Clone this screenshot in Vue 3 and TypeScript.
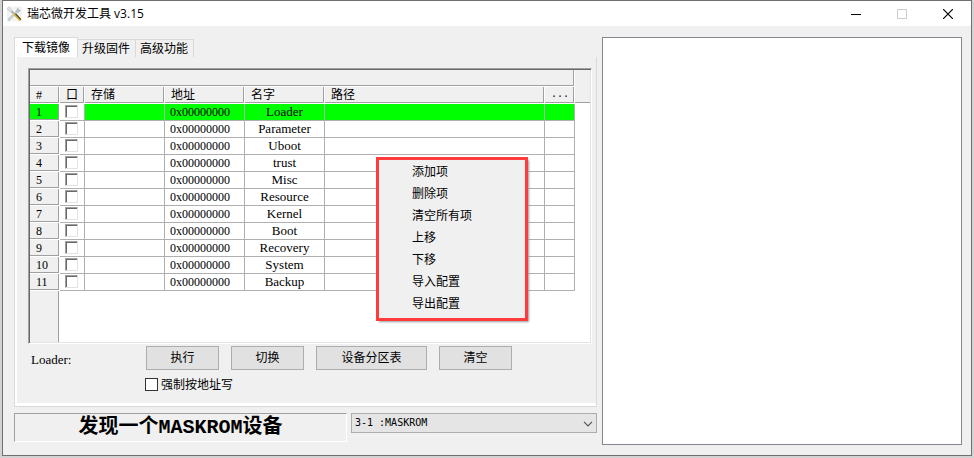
<script setup lang="ts">
import { ref } from 'vue'

interface Partition {
  name: string
  address: string
  storage: string
  path: string
  checked: boolean
}

const tabs: string[] = ['下载镜像', '升级固件', '高级功能']
const activeTab = ref<number>(0)

const names: string[] = [
  'Loader', 'Parameter', 'Uboot', 'trust', 'Misc', 'Resource',
  'Kernel', 'Boot', 'Recovery', 'System', 'Backup',
]
const rows = ref<Partition[]>(
  names.map((name) => ({ name, address: '0x00000000', storage: '', path: '', checked: false })),
)
const selectedRow = ref<number>(0)

const menuItems: string[] = ['添加项', '删除项', '清空所有项', '上移', '下移', '导入配置', '导出配置']
const forceByAddress = ref<boolean>(false)
const device = ref<string>('3-1')
</script>

<template>
  <div class="window">
    <header class="titlebar">
      <svg class="app-icon" viewBox="0 0 16 16" aria-hidden="true">
        <path d="M0 0h16v16H0z" fill="#f4f4f2" />
        <path d="M3 3l6 6.4" stroke="#a4a8aa" stroke-width="1.8" />
        <path d="M.4 1.6 2.4.4l3.4 4L4.2 6 1 4z" fill="#dfe2e3" stroke="#bfc3c5" stroke-width=".6" />
        <path d="M2 14 11 5" stroke="#b9c6ce" stroke-width="2.8" stroke-linecap="round" />
        <path d="M2.2 13.8 10.6 5.4" stroke="#dde5ea" stroke-width="1" stroke-linecap="round" />
        <path d="M9.6 3.6 12 .8l.6 2.4 2.6.6-2.6 2.8-2.8-.2z" fill="#b9c2c8" />
        <path d="M8.6 8.6l5 5" stroke="#d9b23c" stroke-width="3.2" stroke-linecap="round" />
        <path d="M9.4 8.2l5 5.2" stroke="#45453c" stroke-width="1.3" stroke-linecap="round" />
      </svg>
      <h1>瑞芯微开发工具 v3.15</h1>
      <div class="controls">
        <button type="button" aria-label="最小化">
          <svg viewBox="0 0 10 10"><path d="M0 5.5h10" stroke="#000" /></svg>
        </button>
        <button type="button" aria-label="最大化" disabled>
          <svg viewBox="0 0 10 10"><path d="M.5.5h9v9h-9z" stroke="#ccc" fill="none" /></svg>
        </button>
        <button type="button" aria-label="关闭">
          <svg viewBox="0 0 10 10"><path d="M0 0l10 10M10 0L0 10" stroke="#000" stroke-width="1.2" /></svg>
        </button>
      </div>
    </header>

    <main class="body">
      <section class="left">
        <div class="tabs" role="tablist">
          <button
            v-for="(tab, i) in tabs"
            :key="tab"
            type="button"
            role="tab"
            class="tab"
            :class="{ active: i === activeTab }"
            :aria-selected="i === activeTab"
            @click="activeTab = i"
          >{{ tab }}</button>
        </div>

        <div class="page">
          <div class="grid">
            <table>
              <colgroup>
                <col class="c-num"><col class="c-check"><col class="c-mid"><col class="c-mid">
                <col class="c-mid"><col><col class="c-more"><col class="c-rest">
              </colgroup>
              <thead>
                <tr>
                  <th colspan="7"></th>
                  <th class="rest" rowspan="2"></th>
                </tr>
                <tr>
                  <th>#</th>
                  <th class="center">口</th>
                  <th>存储</th>
                  <th>地址</th>
                  <th>名字</th>
                  <th>路径</th>
                  <th class="mono">...</th>
                </tr>
              </thead>
              <tbody>
                <tr
                  v-for="(row, i) in rows"
                  :key="row.name"
                  :class="{ selected: i === selectedRow }"
                  @click="selectedRow = i"
                >
                  <th scope="row">{{ i + 1 }}</th>
                  <td class="check"><input v-model="row.checked" type="checkbox" :aria-label="row.name"></td>
                  <td>{{ row.storage }}</td>
                  <td>{{ row.address }}</td>
                  <td class="name">{{ row.name }}</td>
                  <td>{{ row.path }}</td>
                  <td></td>
                  <td class="rest"></td>
                </tr>
              </tbody>
            </table>
            <div class="grid-rest"></div>

            <ul class="menu" role="menu">
              <li v-for="item in menuItems" :key="item" role="none">
                <button type="button" role="menuitem">{{ item }}</button>
              </li>
            </ul>
          </div>

          <div class="actions">
            <span class="progress">Loader:</span>
            <button type="button" class="btn">执行</button>
            <button type="button" class="btn">切换</button>
            <button type="button" class="btn wide">设备分区表</button>
            <button type="button" class="btn">清空</button>
          </div>
          <label class="force">
            <input v-model="forceByAddress" type="checkbox">
            <span>强制按地址写</span>
          </label>
        </div>

        <div class="footer">
          <output class="status">发现一个MASKROM设备</output>
          <div class="device">
            <select v-model="device" aria-label="设备">
              <option value="3-1">3-1 :MASKROM</option>
            </select>
            <svg viewBox="0 0 10 6" aria-hidden="true"><path d="M1 .8l4 4 4-4" fill="none" stroke="#555" stroke-width="1.2" /></svg>
          </div>
        </div>
      </section>

      <section class="log" aria-label="日志"></section>
    </main>
  </div>
</template>

<style>
body {
  background: #d2d2d2;
}
</style>

<style scoped>
* {
  box-sizing: border-box;
}

.window {
  display: flex;
  flex-direction: column;
  min-height: calc(100vh - 2px);
  margin: 0 2px 2px;
  border: 1px solid #707070;
  background: #f0f0f0;
  color: #000;
  font: 12px/16px "Liberation Serif", "Noto Sans CJK SC", serif;
}

button,
select {
  margin: 0;
  padding: 0;
  border: 0;
  background: none;
  color: inherit;
  font: inherit;
}

input {
  appearance: none;
  flex: none;
  display: block;
  width: 13px;
  height: 13px;
  margin: 0;
  background: #fff;
}

.titlebar {
  display: flex;
  align-items: center;
  height: 25px;
  padding-left: 4px;
  background: #fff;
}

.app-icon {
  width: 15px;
  height: 16px;
}

h1 {
  flex: 1;
  margin: 0 0 0 5px;
  font: 12px/16px "Open Sans", "Noto Sans CJK SC", sans-serif;
}

.controls {
  display: flex;
  height: 100%;
}

.controls button {
  display: flex;
  align-items: center;
  justify-content: center;
  width: 46px;
}

.controls svg {
  width: 10px;
  height: 10px;
}

.body {
  flex: 1;
  display: grid;
  grid-template-columns: minmax(0, 583fr) minmax(0, 360fr);
  gap: 5px;
  padding: 11px 9px 10px 11px;
}

.left {
  display: flex;
  flex-direction: column;
  padding-bottom: 3px;
}

.tabs {
  display: flex;
  align-items: flex-end;
  height: 20px;
}

.tab {
  height: 18px;
  padding: 0 5px 0 4px;
  border: 1px solid #d9d9d9;
  border-width: 1px 1px 0 0;
}

.tab.active {
  height: 20px;
  padding: 0 7px;
  border-left-width: 1px;
  background: #fff;
}

.page {
  flex: 1;
  display: flex;
  flex-direction: column;
  padding: 11px 4px 15px 13px;
  border: 1px solid #d9d9d9;
  border-top: 0;
  box-shadow: inset 2px 0 #fff, inset 0 -3px #fff;
}

.grid {
  position: relative;
  flex: 1;
  display: flex;
  flex-direction: column;
  border: 1px solid #a0a0a0;
  border-right-color: #fff;
  border-bottom-color: #fff;
  padding: 1px;
  background: #fff;
  box-shadow: inset 1px 1px #696969, inset -1px -1px #e3e3e3;
}

table {
  width: 100%;
  table-layout: fixed;
  border-collapse: separate;
  border-spacing: 0;
}

.c-num { width: 30px; }
.c-check { width: 25px; }
.c-mid { width: 80px; }
.c-more { width: 30px; }
.c-rest { width: 15px; }

th,
td {
  height: 17px;
  padding: 0 5px;
  border: solid #b0b0b0;
  border-width: 0 1px 1px 0;
  font-weight: 400;
  text-align: left;
  white-space: nowrap;
}

th {
  padding: 0 6px;
  border-color: #fff;
  background: #f0f0f0;
  box-shadow: inset -1px -1px #a0a0a0;
}

.center {
  padding: 0;
  text-align: center;
}

.mono {
  font-family: "Liberation Mono", monospace;
  font-size: 10px;
}

th.rest {
  border-right: 0;
  box-shadow: inset 0 -1px #a0a0a0;
}

td.rest {
  border: 0;
}

td.name {
  padding: 0;
  text-align: center;
  font-size: 13px;
}

.check {
  padding: 1px 5px 0;
  vertical-align: top;
}

.check input,
.check input:checked {
  border: 1px solid #a0a0a0;
  border-right-color: #e3e3e3;
  border-bottom-color: #e3e3e3;
  box-shadow: inset 1px 1px #696969;
}

.selected th,
.selected td:not(.check, .rest) {
  background: #0f0;
}

.grid-rest {
  flex: 1;
  width: 30px;
  border-right: 1px solid #fff;
  background: #f0f0f0;
  box-shadow: inset -1px 0 #a0a0a0;
}

.menu {
  position: absolute;
  top: 88px;
  left: 347px;
  width: 152px;
  margin: 0;
  padding: 1px 0 3px;
  border: 3px solid #ff3b3b;
  background: #f0f0f0;
  box-shadow: 2px 2px 2px -1px #999;
  list-style: none;
}

.menu button {
  display: block;
  width: 100%;
  height: 22px;
  padding-left: 33px;
  text-align: left;
}

.actions {
  display: flex;
  gap: 12px;
  margin-top: 2px;
}

.progress {
  width: 106px;
  padding: 6px 0 0 3px;
  font-size: 13px;
}

.btn {
  width: 73px;
  height: 24px;
  border: 1px solid #adadad;
  background: #e1e1e1;
}

.btn.wide {
  width: 111px;
}

.force {
  display: flex;
  align-items: center;
  align-self: flex-start;
  gap: 3px;
  height: 13px;
  margin: 8px 0 0 117px;
}

.force input {
  border: 1px solid #333;
}

.force input:checked {
  background: #333;
}

.footer {
  display: grid;
  grid-template-columns: minmax(0, 333fr) minmax(0, 246fr);
  align-items: start;
  gap: 4px;
  margin-top: 6px;
}

.status {
  border: 1px solid #a0a0a0;
  border-right-color: #fff;
  border-bottom-color: #fff;
  font: 700 20px/27px "Liberation Mono", "Noto Sans CJK SC", monospace;
  text-align: center;
}

.device {
  position: relative;
}

select {
  appearance: none;
  display: block;
  width: 100%;
  height: 20px;
  padding: 0 20px 0 3px;
  border: 1px solid #adadad;
  background: #e5e5e5;
  font: 10px/16px "DejaVu Sans Mono", monospace;
}

.device svg {
  position: absolute;
  top: 8px;
  right: 4px;
  width: 10px;
  height: 6px;
  pointer-events: none;
}

.log {
  border: 1px solid #828790;
  background: #fff;
}
</style>
